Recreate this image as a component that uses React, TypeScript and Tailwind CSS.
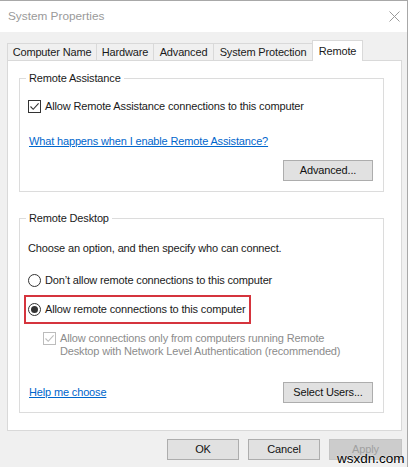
import React from "react"

const font = { fontFamily: '"Liberation Sans", Arial, sans-serif' }

function Checkbox({ checked, disabled }: { checked?: boolean; disabled?: boolean }) {
  const c = disabled ? "#bcbcbc" : "#333333"
  return (
    <span
      className={`flex h-[13px] w-[13px] shrink-0 items-center justify-center border bg-white ${
        disabled ? "border-[#bcbcbc]" : "border-[#333333]"
      }`}
    >
      {checked && (
        <svg width="11" height="11" viewBox="0 0 11 11">
          <path d="M1.5 5.5 L4.2 8.3 L9.6 2.4" fill="none" stroke={c} strokeWidth="1.1" />
        </svg>
      )}
    </span>
  )
}

function Radio({ checked }: { checked?: boolean }) {
  return (
    <span className="flex h-[13px] w-[13px] shrink-0 items-center justify-center rounded-full border border-[#333333] bg-white">
      {checked && <span className="h-[7px] w-[7px] rounded-full bg-[#333333]" />}
    </span>
  )
}

function Btn({ children, w, disabled }: { children: React.ReactNode; w: string; disabled?: boolean }) {
  return (
    <div
      className={`flex h-[21px] items-center justify-center border ${w} ${
        disabled
          ? "border-[#c4c4c4] bg-[#cccccc] text-[#a0a0a0]"
          : "border-[#adadad] bg-[#e1e1e1] text-[#111111]"
      }`}
    >
      {children}
    </div>
  )
}

function Group({ title, children, className }: { title: string; children: React.ReactNode; className?: string }) {
  return (
    <div className={`relative ml-[11px] mr-[17px] border border-[#dcdcdc] pl-[8px] pr-[10px] ${className ?? ""}`}>
      <span className="absolute -top-[8px] left-[6px] bg-white px-[3px] leading-[14px]">{title}</span>
      {children}
    </div>
  )
}

const tabs = ["Computer Name", "Hardware", "Advanced", "System Protection"]
const tabW = ["w-[89px]", "w-[57px]", "w-[60px]", "w-[99px]"]

export default function App() {
  return (
    <div
      className="relative h-[467px] w-[411px] overflow-hidden whitespace-nowrap bg-white text-[11px] tracking-[-0.15px] text-[#1a1a1a]"
      style={font}
    >
      <div className="h-[467px] w-[408px] border-r border-t border-[#a8a8a8] bg-[#f0f0f0]">
        {/* title bar */}
        <div className="flex h-[31px] items-center justify-between bg-white pl-[8px] pr-[7px]">
          <span className="text-[11.8px] tracking-normal text-[#9a9a9a]">System Properties</span>
          <svg width="11" height="11" viewBox="0 0 11 11">
            <path d="M0.5 0.5 L10.5 10.5 M10.5 0.5 L0.5 10.5" stroke="#9a9a9a" strokeWidth="1" />
          </svg>
        </div>

        <div className="px-[7px]">
          {/* tabs */}
          <div className="mt-[8px] flex h-[20px] items-end">
            {tabs.map((t, i) => (
              <div
                key={t}
                className={`flex h-[17px] items-center justify-center border-l border-t border-[#d9d9d9] ${tabW[i]}`}
              >
                {t}
              </div>
            ))}
            <div className="relative z-10 -mb-[1px] flex h-[21px] w-[51px] items-start justify-center border-x border-t border-[#d9d9d9] bg-white pt-[2px]">
              Remote
            </div>
          </div>

          {/* panel */}
          <div className="h-[371px] w-[395px] border border-[#d9d9d9] bg-white pt-[17px]">
            <Group title="Remote Assistance" className="h-[114px]">
              <div className="mt-[17px] flex h-[20px] items-center gap-[4px]">
                <Checkbox checked />
                <span>Allow Remote Assistance connections to this computer</span>
              </div>
              <div className="mt-[15px] flex h-[20px] items-center pl-[1px]">
                <span className="text-[#0066cc] underline">What happens when I enable Remote Assistance?</span>
              </div>
              <div className="mt-[9px] flex justify-end">
                <Btn w="w-[90px]">Advanced...</Btn>
              </div>
            </Group>

            <Group title="Remote Desktop" className="mt-[26px] h-[195px]">
              <div className="mt-[19px] flex h-[20px] items-center">
                Choose an option, and then specify who can connect.
              </div>
              <div className="mt-[12px] flex h-[20px] items-center gap-[4px]">
                <Radio />
                <span>Don’t allow remote connections to this computer</span>
              </div>
              <div className="-ml-[4px] mt-[5px] flex h-[29px] w-[227px] items-center gap-[4px] border-2 border-[#d5343d] pl-[2px]">
                <Radio checked />
                <span>Allow remote connections to this computer</span>
              </div>
              <div className="mt-[8px] flex gap-[4px] pl-[15px] text-[#8c8c8c]">
                <Checkbox checked disabled />
                <span className="leading-[13px]">
                  Allow connections only from computers running Remote
                  <br />
                  Desktop with Network Level Authentication (recommended)
                </span>
              </div>
              <div className="mt-[24px] flex items-center justify-between pl-[1px]">
                <span className="text-[#0066cc] underline">Help me choose</span>
                <Btn w="w-[90px]">Select Users...</Btn>
              </div>
            </Group>
          </div>

          {/* dialog buttons */}
          <div className="mt-[8px] flex justify-end gap-[9px]">
            <Btn w="w-[72px]">OK</Btn>
            <Btn w="w-[72px]">Cancel</Btn>
            <div className="-mr-[2px]">
              <Btn w="w-[73px]" disabled>
                Apply
              </Btn>
            </div>
          </div>
        </div>
      </div>

      <span className="absolute left-[337px] top-[449px] text-[13.5px] tracking-normal text-black [text-shadow:0_0_2px_#fff]">
        wsxdn.com
      </span>
    </div>
  )
}
